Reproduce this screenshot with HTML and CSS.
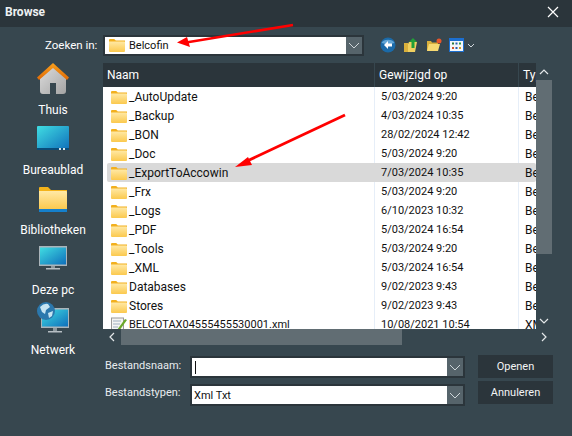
FILE: index.html
```html
<!DOCTYPE html>
<html lang="nl">
<head>
<meta charset="utf-8">
<title>Browse</title>
<link rel="stylesheet" href="styles.css">
</head>
<body>
<svg class="defs" width="0" height="0">
  <defs>
    <linearGradient id="fg" x1="0" y1="0" x2="0" y2="1"><stop offset="0" stop-color="#ffe9a6"/><stop offset="1" stop-color="#fbc94e"/></linearGradient>
    <linearGradient id="sc" x1="0" y1="0" x2="1" y2="1"><stop offset="0" stop-color="#40dde2"/><stop offset="1" stop-color="#0f6fbb"/></linearGradient>
    <linearGradient id="hm" x1="0" y1="0" x2="1" y2="1"><stop offset="0" stop-color="#dcdcdc"/><stop offset="1" stop-color="#a4a4a4"/></linearGradient>
    <linearGradient id="rf" x1="0" y1="0" x2="0" y2="1"><stop offset="0" stop-color="#f9a01e"/><stop offset="1" stop-color="#e06a04"/></linearGradient>
    <symbol id="folder" viewBox="0 0 16 14">
      <path d="M0 2.200Q0 1 1 1h4.200l1.600 1.600H16V4H0z" fill="#f2b01e"/>
      <path d="M0 3.400h15.200q.8 0 .8.800V13q0 1-1 1H1q-1 0-1-1z" fill="url(#fg)"/>
    </symbol>
  </defs>
</svg>
<main class="dialog">
  <header class="titlebar">
    <strong class="title">Browse</strong>
    <svg class="close" width="12" height="12" viewBox="0 0 12 12"><path d="M1 1l10 10M11 1L1 11" stroke="#fff" stroke-width="1.200"/></svg>
  </header>
  <div class="body">
    <nav class="places">
      <div class="place">
        <svg width="32" height="31" viewBox="0 0 32 31"><path d="M16 4L3 15v13q0 3 3 3h7v-11h6v11h7q3 0 3-3V15z" fill="url(#hm)"/><path d="M0 14.500L16 0l16 14.500-2 2.500L16 5 2 17z" fill="url(#rf)"/></svg>
        <span>Thuis</span>
      </div>
      <div class="place">
        <svg width="32" height="24" viewBox="0 0 32 24"><rect width="32" height="24" rx="1" fill="url(#sc)"/><rect y="22" width="32" height="2" fill="#0a4c78"/><rect x="22" y="22" width="2" height="2" fill="#d8e4ea"/><rect x="26" y="22" width="2" height="2" fill="#d8e4ea"/></svg>
        <span>Bureaublad</span>
      </div>
      <div class="place">
        <svg width="28" height="25" viewBox="0 0 28 25"><path d="M0 1q0-1 1-1h8l3 3h16v3H0z" fill="#f4b31a"/><path d="M0 4h27q1 0 1 1v17H0z" fill="url(#fg)"/><rect y="22" width="28" height="3" fill="#1580cc"/></svg>
        <span>Bibliotheken</span>
      </div>
      <div class="place">
        <svg width="28" height="24" viewBox="0 0 28 24"><rect width="28" height="20" fill="#aab4ba"/><rect x="1" y="1.500" width="26" height="17" fill="url(#sc)"/><rect x="12" y="20" width="4" height="2" fill="#8d989e"/><rect x="7" y="22" width="14" height="1.500" fill="#b6bec3"/></svg>
        <span>Deze pc</span>
      </div>
      <div class="place">
        <svg width="32" height="31" viewBox="0 0 32 31"><rect x="4" y="6" width="28" height="20" fill="#aab4ba"/><rect x="5" y="7.500" width="26" height="17" fill="url(#sc)"/><rect x="16" y="26" width="4" height="3" fill="#8d989e"/><rect x="11" y="29" width="14" height="1.500" fill="#b6bec3"/><circle cx="9" cy="9" r="9" fill="#2b78ad"/><path d="M3 5q4-4 8-3l2 3-4 3-1 4-3-2zM11 11l5-2-1 5-3 2z" fill="#c6e4f2"/></svg>
        <span>Netwerk</span>
      </div>
    </nav>
    <div class="main">
      <div class="lookin">
        <label class="lookin-label">Zoeken in:</label>
        <div class="combo combo-top">
          <div class="combo-value">
            <svg class="ico" width="16" height="14"><use href="#folder"/></svg>
            <span>Belcofin</span>
          </div>
          <div class="combo-btn"><svg width="12" height="7" viewBox="0 0 12 7"><path d="M1 1l5 5 5-5" fill="none" stroke="#cfd6da" stroke-width="1"/></svg></div>
        </div>
        <div class="tools">
          <svg width="16" height="16" viewBox="0 0 16 16"><circle cx="8" cy="8" r="7.500" fill="#1b6aa8"/><path d="M1.500 6a7 5 0 0 1 13 0q-6.500 2-13 0z" fill="#63a6d6"/><path d="M8 4L4 8l4 4V9.500h4v-3H8z" fill="#fff"/></svg>
          <svg width="16" height="16" viewBox="0 0 16 16"><path d="M2 7h3l1-2h8l-2 10H1z" fill="#f0d060"/><path d="M1 6h4v9H1z" fill="#d9b03c"/><path d="M10 1l4 4h-2.500v6h-3V5H6z" fill="#21a038"/></svg>
          <svg width="16" height="16" viewBox="0 0 16 16"><path d="M1 4h4l1 1.500h6V14H1z" fill="#d9b03c"/><path d="M3 7h11l-2 7H1z" fill="#f7da72"/><circle cx="13" cy="4" r="2.500" fill="#e8562a"/></svg>
          <div class="viewmenu">
            <svg width="15" height="14" viewBox="0 0 15 14"><rect width="15" height="14" fill="#1c6fd0"/><rect x="1" y="3" width="13" height="10" fill="#f5f7fa"/><rect x="3" y="4.500" width="2" height="2" fill="#2a7a3a"/><rect x="6.500" y="4.500" width="2" height="2" fill="#2a5fb0"/><rect x="10" y="4.500" width="2" height="2" fill="#2a9a4a"/><rect x="3" y="9" width="2" height="2" fill="#d0542a"/><rect x="6.500" y="9" width="2" height="2" fill="#2a5fb0"/><rect x="10" y="9" width="2" height="2" fill="#d0a02a"/></svg>
            <svg width="8" height="5" viewBox="0 0 8 5"><path d="M1 1l3 3 3-3" fill="none" stroke="#cfd6da"/></svg>
          </div>
        </div>
      </div>
      <div class="browser">
        <div class="listwrap">
          <div class="list">
            <div class="thead">
              <div class="th th-name">Naam</div>
              <div class="th th-date">Gewijzigd op</div>
              <div class="th th-type">Type</div>
            </div>
            <div class="row"><div class="c-name"><svg class="ico" width="16" height="14"><use href="#folder"/></svg><span>_AutoUpdate</span></div><div class="c-date">5/03/2024 9:20</div><div class="c-type">Bestandsmap</div></div>
            <div class="row"><div class="c-name"><svg class="ico" width="16" height="14"><use href="#folder"/></svg><span>_Backup</span></div><div class="c-date">4/03/2024 10:35</div><div class="c-type">Bestandsmap</div></div>
            <div class="row"><div class="c-name"><svg class="ico" width="16" height="14"><use href="#folder"/></svg><span>_BON</span></div><div class="c-date">28/02/2024 12:42</div><div class="c-type">Bestandsmap</div></div>
            <div class="row"><div class="c-name"><svg class="ico" width="16" height="14"><use href="#folder"/></svg><span>_Doc</span></div><div class="c-date">5/03/2024 9:20</div><div class="c-type">Bestandsmap</div></div>
            <div class="row row-hover"><div class="c-name"><svg class="ico" width="16" height="14"><use href="#folder"/></svg><span>_ExportToAccowin</span></div><div class="c-date">7/03/2024 10:35</div><div class="c-type">Bestandsmap</div></div>
            <div class="row"><div class="c-name"><svg class="ico" width="16" height="14"><use href="#folder"/></svg><span>_Frx</span></div><div class="c-date">5/03/2024 9:20</div><div class="c-type">Bestandsmap</div></div>
            <div class="row"><div class="c-name"><svg class="ico" width="16" height="14"><use href="#folder"/></svg><span>_Logs</span></div><div class="c-date">6/10/2023 10:32</div><div class="c-type">Bestandsmap</div></div>
            <div class="row"><div class="c-name"><svg class="ico" width="16" height="14"><use href="#folder"/></svg><span>_PDF</span></div><div class="c-date">5/03/2024 16:54</div><div class="c-type">Bestandsmap</div></div>
            <div class="row"><div class="c-name"><svg class="ico" width="16" height="14"><use href="#folder"/></svg><span>_Tools</span></div><div class="c-date">5/03/2024 9:20</div><div class="c-type">Bestandsmap</div></div>
            <div class="row"><div class="c-name"><svg class="ico" width="16" height="14"><use href="#folder"/></svg><span>_XML</span></div><div class="c-date">5/03/2024 16:54</div><div class="c-type">Bestandsmap</div></div>
            <div class="row"><div class="c-name"><svg class="ico" width="16" height="14"><use href="#folder"/></svg><span>Databases</span></div><div class="c-date">9/02/2023 9:43</div><div class="c-type">Bestandsmap</div></div>
            <div class="row"><div class="c-name"><svg class="ico" width="16" height="14"><use href="#folder"/></svg><span>Stores</span></div><div class="c-date">9/02/2023 9:43</div><div class="c-type">Bestandsmap</div></div>
            <div class="row"><div class="c-name"><svg class="ico" width="16" height="16" viewBox="0 0 16 16"><rect x=".5" y="1" width="12" height="15" fill="#f4f4f4" stroke="#9a9a9a"/><path d="M2 4h8M2 7h7M2 10h5" stroke="#9fb0c0"/><path d="M6 13l8-11 2 1-8 11-3 1z" fill="#6aa82a"/></svg><span class="narrow">BELCOTAX04555455530001.xml</span></div><div class="c-date">10/08/2021 10:54</div><div class="c-type">XML-bestand</div></div>
          </div>
          <div class="vscroll">
            <svg class="sb-arrow" width="10" height="6" viewBox="0 0 10 6"><path d="M1 5l4-4 4 4" fill="none" stroke="#e4e8ea" stroke-width="1.200"/></svg>
            <div class="vtrack"><div class="vthumb"></div></div>
            <svg class="sb-arrow" width="10" height="6" viewBox="0 0 10 6"><path d="M1 1l4 4 4-4" fill="none" stroke="#e4e8ea" stroke-width="1.200"/></svg>
          </div>
        </div>
        <div class="hscroll">
          <svg class="sb-h" width="6" height="10" viewBox="0 0 6 10"><path d="M5 1L1 5l4 4" fill="none" stroke="#e4e8ea" stroke-width="1.200"/></svg>
          <div class="htrack"><div class="hthumb"></div></div>
          <svg class="sb-h" width="6" height="10" viewBox="0 0 6 10"><path d="M1 1l4 4-4 4" fill="none" stroke="#e4e8ea" stroke-width="1.200"/></svg>
        </div>
      </div>
      <div class="form">
        <div class="fields">
          <div class="field">
            <label class="field-label">Bestandsnaam:</label>
            <div class="combo combo-field"><div class="combo-value"><span class="caret"></span></div><div class="combo-btn"><svg width="12" height="7" viewBox="0 0 12 7"><path d="M1 1l5 5 5-5" fill="none" stroke="#cfd6da"/></svg></div></div>
          </div>
          <div class="field">
            <label class="field-label">Bestandstypen:</label>
            <div class="combo combo-field"><div class="combo-value"><span class="typeval">Xml Txt</span></div><div class="combo-btn"><svg width="12" height="7" viewBox="0 0 12 7"><path d="M1 1l5 5 5-5" fill="none" stroke="#cfd6da"/></svg></div></div>
          </div>
        </div>
        <div class="buttons">
          <button class="btn" type="button">Openen</button>
          <button class="btn" type="button">Annuleren</button>
        </div>
      </div>
    </div>
  </div>
  <svg class="annot" width="572" height="436" viewBox="0 0 572 436">
    <path d="M293 25L186 42.500" stroke="#f00" stroke-width="2.500" fill="none"/>
    <path d="M177 42.500l10-5.500 3 10z" fill="#f00"/>
    <path d="M345 115L245 162" stroke="#f00" stroke-width="2.800" fill="none"/>
    <path d="M235 167l13-10 4 8z" fill="#f00"/>
  </svg>
</main>
</body>
</html>
```

FILE: styles.css
```css
* { box-sizing: border-box; }
html, body { margin: 0; padding: 0; }
body { width: 572px; height: 436px; overflow: hidden; font-family: Roboto, "Liberation Sans", Arial, sans-serif; font-size: 12px; color: #fff; background: #37474f; }
.defs { position: absolute; }
.dialog { position: relative; width: 572px; height: 436px; display: flex; flex-direction: column; background: #37474f; }
.titlebar { height: 27px; flex: none; background: #2b353b; display: flex; align-items: center; justify-content: space-between; padding: 0 13px 3px 5px; }
.title { font-size: 12px; font-weight: 700; color: #eef1f3; }
.body { flex: 1; display: flex; min-height: 0; }
.places { width: 103px; flex: none; display: flex; flex-direction: column; align-items: center; padding: 35px 0 0 3px; }
.place { height: 60px; width: 100%; display: flex; flex-direction: column; align-items: center; justify-content: flex-end; }
.place span { line-height: 15px; }
.place:nth-child(1) { height: 56px; gap: 9px; }
.place:nth-child(2) { gap: 13px; }
.place:nth-child(3) { gap: 11px; }
.place:nth-child(4) { gap: 13px; }
.place:nth-child(5) { gap: 10px; }
.main { flex: 1; min-width: 0; display: flex; flex-direction: column; }
.lookin { height: 36px; display: flex; align-items: center; }
.lookin-label { width: 0; flex: none; white-space: nowrap; font-size: 11.500px; transform: translateX(-58px); }
.combo { display: flex; border: 2px solid #2b353b; background: #fff; }
.combo-value { flex: 1; display: flex; align-items: center; gap: 4px; padding-left: 1px; color: #111; min-width: 0; background: #fff; font-size: 11px; }
.combo-btn { width: 16px; flex: none; display: flex; align-items: center; justify-content: center; background: #56646b; }
.combo-top { width: 261px; height: 21px; }
.combo-top .combo-value { padding-left: 4px; }
.typeval { padding-left: 1px; }
.tools { display: flex; align-items: center; gap: 7px; margin-left: 16px; }
.viewmenu { display: flex; align-items: center; gap: 3px; }
.browser { width: 449px; display: flex; flex-direction: column; }
.listwrap { display: flex; height: 266px; }
.list { width: 433px; flex: none; background: #fff; overflow: hidden; }
.thead { display: flex; height: 24px; background: #2b353b; color: #fff; font-size: 12px; }
.th { display: flex; align-items: center; padding-left: 4px; border-right: 1px solid #37474f; white-space: nowrap; overflow: hidden; }
.th-name { width: 272px; }
.th-date { width: 144px; }
.th-type { width: 17px; border: 0; }
.row { display: flex; height: 19px; align-items: center; color: #111; white-space: nowrap; }
.row-hover { background: #d9d9d9; margin-left: 4px; border-radius: 2px; }
.row-hover .c-name { width: 268px; padding-left: 4px; }
.c-name { width: 272px; display: flex; align-items: center; gap: 2px; padding-left: 8px; height: 100%; border-right: 1px solid #e6eef8; }
.narrow { font-size: 11px; }
.row-hover .c-name, .row-hover .c-date { border-color: transparent; }
.c-date { width: 144px; padding-left: 6px; height: 100%; line-height: 19px; font-size: 11px; border-right: 1px solid #e6eef8; }
.c-type { width: 17px; padding-left: 6px; overflow: hidden; }
.ico { flex: none; }
.vscroll { width: 16px; flex: none; display: flex; flex-direction: column; align-items: center; background: #37474f; padding: 6px 0 5px; }
.vtrack { flex: 1; width: 100%; padding-top: 5px; }
.vthumb { height: 174px; width: 100%; background: #616d73; }
.sb-arrow { flex: none; }
.hscroll { height: 16px; display: flex; align-items: center; padding: 0 5px 0 6px; }
.htrack { flex: 1; height: 100%; padding: 0 6px; }
.hthumb { width: 281px; height: 100%; background: #616d73; }
.sb-h { flex: none; }
.form { display: flex; padding-top: 10px; }
.fields { width: 362px; display: flex; flex-direction: column; gap: 4px; }
.field { display: flex; align-items: center; height: 24px; }
.field:nth-child(1) .field-label { margin-bottom: 3px; }
.field:nth-child(2) .field-label { margin-bottom: 6px; }
.field-label { width: 87px; flex: none; padding-left: 2px; font-size: 11px; color: #e8ecee; }
.combo-field { width: 275px; height: 22px; }
.caret { width: 1px; height: 13px; background: #111; margin-left: 2px; }
.buttons { display: flex; flex-direction: column; gap: 3px; margin-left: 13px; }
.btn { width: 75px; height: 23px; background: #2b353b; color: #f2f4f5; border: 0; padding: 0; font: 11px Roboto, "Liberation Sans", Arial, sans-serif; }
.annot { position: absolute; left: 0; top: 0; pointer-events: none; }
```
